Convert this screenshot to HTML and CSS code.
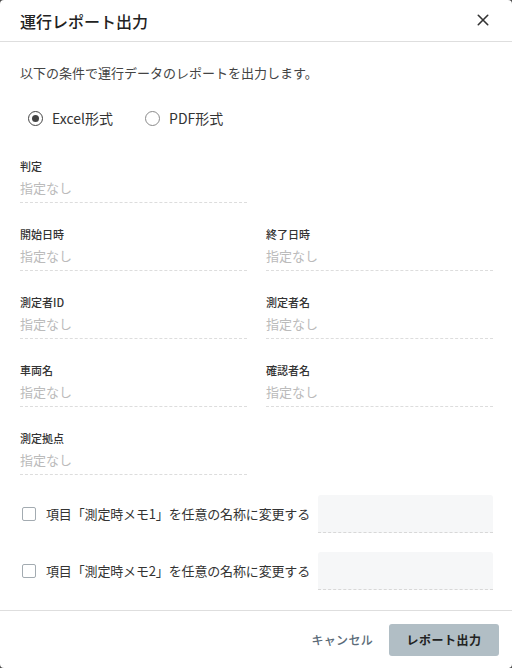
FILE: index.html
```html
<!DOCTYPE html>
<html lang="ja">
<head>
    <meta charset="UTF-8">
    <meta name="viewport" content="width=device-width, initial-scale=1.0">
    <title>運行レポート出力</title>
    <link rel="stylesheet" href="styles.css">
</head>
<body>
    <div class="dialog">
        <!-- Header -->
        <header class="dialog-header">
            <h1 class="dialog-title">運行レポート出力</h1>
            <button class="close-btn" aria-label="閉じる">
                <svg viewBox="0 0 14 14" width="12" height="12" fill="none">
                    <path d="M1.5 1.5L12.5 12.5M12.5 1.5L1.5 12.5" stroke="#333" stroke-width="1.9" stroke-linecap="round"/>
                </svg>
            </button>
        </header>

        <!-- Body -->
        <div class="dialog-body">
            <p class="description">以下の条件で運行データのレポートを出力します。</p>

            <div class="radio-group">
                <label class="radio">
                    <span class="radio-mark checked"></span>
                    <span>Excel形式</span>
                </label>
                <label class="radio">
                    <span class="radio-mark"></span>
                    <span>PDF形式</span>
                </label>
            </div>

            <div class="field-grid">
                <div class="field">
                    <div class="field-label">判定</div>
                    <div class="field-value">指定なし</div>
                </div>
                <div></div>

                <div class="field">
                    <div class="field-label">開始日時</div>
                    <div class="field-value">指定なし</div>
                </div>
                <div class="field">
                    <div class="field-label">終了日時</div>
                    <div class="field-value">指定なし</div>
                </div>

                <div class="field">
                    <div class="field-label">測定者ID</div>
                    <div class="field-value">指定なし</div>
                </div>
                <div class="field">
                    <div class="field-label">測定者名</div>
                    <div class="field-value">指定なし</div>
                </div>

                <div class="field">
                    <div class="field-label">車両名</div>
                    <div class="field-value">指定なし</div>
                </div>
                <div class="field">
                    <div class="field-label">確認者名</div>
                    <div class="field-value">指定なし</div>
                </div>

                <div class="field">
                    <div class="field-label">測定拠点</div>
                    <div class="field-value">指定なし</div>
                </div>
            </div>

            <div class="rename-list">
                <div class="rename-row">
                    <span class="checkbox"></span>
                    <span class="rename-text">項目「測定時メモ1」を任意の名称に変更する</span>
                    <div class="rename-input"></div>
                </div>
                <div class="rename-row">
                    <span class="checkbox"></span>
                    <span class="rename-text">項目「測定時メモ2」を任意の名称に変更する</span>
                    <div class="rename-input"></div>
                </div>
            </div>
        </div>

        <!-- Footer -->
        <footer class="dialog-footer">
            <button class="btn btn-cancel">キャンセル</button>
            <button class="btn btn-submit">レポート出力</button>
        </footer>
    </div>
</body>
</html>
```

FILE: styles.css
```css
/* Reset and Base Styles */
* {
    margin: 0;
    padding: 0;
    box-sizing: border-box;
    font-family: "Noto Sans CJK JP", "Noto Sans", sans-serif;
}

:root {
    --text-dark: #222222;
    --text-body: #444444;
    --placeholder: #bbbbbb;
    --line: #dedede;
    --dash: #dddddd;
    --muted-blue: #5b6b78;
    --btn-disabled: #b1bec5;
}

body {
    background-color: #4a4a4a;
    width: 512px;
    height: 668px;
}

/* Dialog */
.dialog {
    background-color: #ffffff;
    width: 512px;
    height: 668px;
    border-radius: 4px;
    display: flex;
    flex-direction: column;
    overflow: hidden;
}

.dialog-header {
    height: 42px;
    padding: 0 20px;
    border-bottom: 1px solid var(--line);
    display: flex;
    align-items: center;
    justify-content: space-between;
}

.dialog-title {
    font-size: 16px;
    font-weight: 500;
    color: var(--text-dark);
    line-height: 24px;
    margin-top: 1px;
}

.close-btn {
    background: none;
    border: none;
    cursor: pointer;
    display: flex;
    margin-right: 3px;
    margin-top: -1px;
}

/* Body */
.dialog-body {
    flex: 1;
    padding: 21px 19px 0 20px;
}

.description {
    font-size: 13px;
    line-height: 20px;
    color: var(--text-body);
}

.radio-group {
    display: flex;
    gap: 32px;
    margin-top: 25px;
    padding-left: 8px;
}

.radio {
    display: flex;
    align-items: center;
    gap: 9px;
    font-size: 14px;
    line-height: 20px;
    color: #333333;
}

.radio-mark {
    width: 15px;
    height: 15px;
    border: 1.5px solid #8a8a8a;
    border-radius: 50%;
    display: flex;
    align-items: center;
    justify-content: center;
}

.radio-mark.checked {
    border-color: #444444;
}

.radio-mark.checked::after {
    content: "";
    width: 7px;
    height: 7px;
    border-radius: 50%;
    background-color: #444444;
}

/* Fields */
.field-grid {
    display: grid;
    grid-template-columns: 227px 227px;
    column-gap: 19px;
    row-gap: 23px;
    margin-top: 30px;
}

.field-label {
    font-size: 11px;
    line-height: 16px;
    font-weight: 500;
    color: #333333;
    margin-bottom: 4px;
}

.field-value {
    font-size: 13px;
    line-height: 20px;
    color: var(--placeholder);
    padding-bottom: 4px;
    border-bottom: 1px dashed var(--dash);
}

/* Rename rows */
.rename-list {
    margin-top: 20px;
    display: flex;
    flex-direction: column;
    gap: 19px;
}

.rename-row {
    display: flex;
    align-items: center;
    height: 38px;
}

.checkbox {
    width: 14px;
    height: 14px;
    border: 1.5px solid #a3abb1;
    border-radius: 2px;
    margin-left: 2px;
    flex-shrink: 0;
}

.rename-text {
    font-size: 13px;
    line-height: 20px;
    color: #333333;
    margin-left: 10px;
    letter-spacing: -0.15px;
    white-space: nowrap;
}

.rename-input {
    flex: 1;
    height: 38px;
    margin-left: 8px;
    background-color: #f6f7f8;
    border-radius: 3px 3px 0 0;
    border-bottom: 1px dashed #d8d8d8;
}

/* Footer */
.dialog-footer {
    height: 58px;
    border-top: 1px solid var(--line);
    display: flex;
    align-items: center;
    justify-content: flex-end;
    padding: 0 13px 0 0;
    gap: 16px;
}

.btn {
    border: none;
    cursor: pointer;
    font-size: 12px;
    font-weight: 500;
}

.btn-cancel {
    background: none;
    color: var(--muted-blue);
    letter-spacing: 0.3px;
    padding: 0;
}

.btn-submit {
    background-color: var(--btn-disabled);
    color: #222222;
    font-weight: 700;
    letter-spacing: 0.5px;
    width: 110px;
    height: 32px;
    border-radius: 3px;
}
```
